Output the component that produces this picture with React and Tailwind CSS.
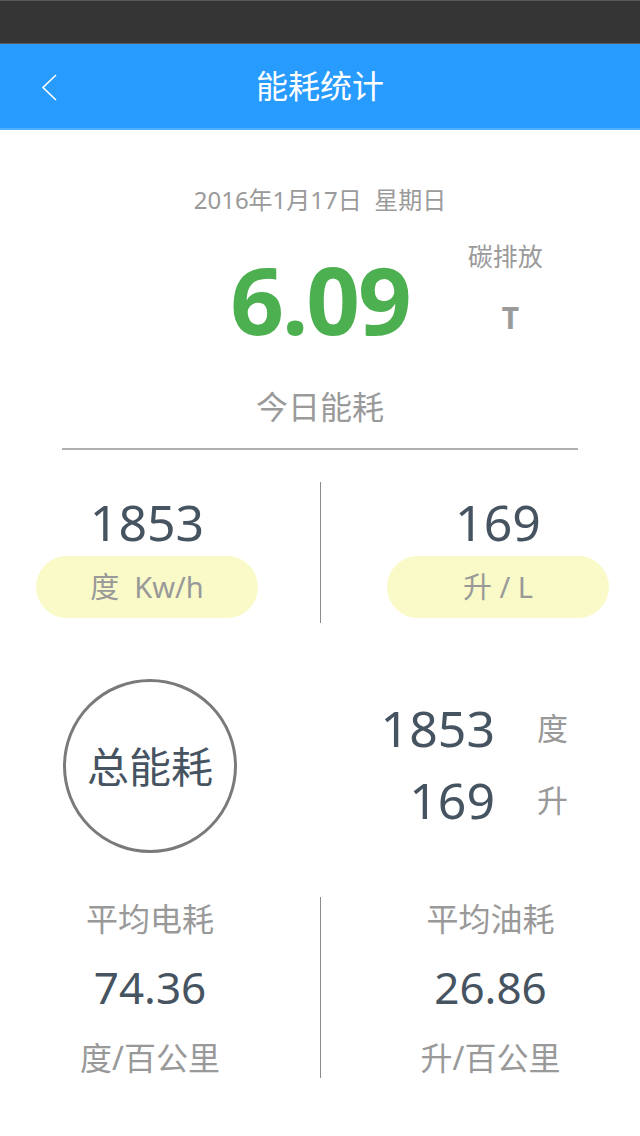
export default function App() {
  const sans = { fontFamily: '"Noto Sans", "Noto Sans CJK SC", sans-serif' };
  return (
    <div className="w-[640px] h-[1136px] bg-white overflow-hidden" style={sans}>
      {/* status bar */}
      <div className="h-[44px] bg-[#353535] border-t border-b border-[#5a5a5a]" />
      {/* header */}
      <div className="h-[86px] bg-[#289bff] border-b-2 border-[#52b1ff] flex items-center relative">
        <svg className="absolute left-[40px] top-[28px]" width="20" height="30" viewBox="0 0 20 30">
          <polyline points="16,3 3,15.5 16,28" fill="none" stroke="white" strokeWidth="1.6" />
        </svg>
        <div className="flex-1 text-center text-white text-[32px] leading-[40px]">能耗统计</div>
      </div>

      {/* today section */}
      <div className="flex flex-col items-center">
        <div className="mt-[55px] text-[24px] leading-[30px] text-[#9a9a9a]">2016年1月17日&nbsp;&nbsp;星期日</div>
        <div className="w-full grid grid-cols-[1fr_auto_1fr] mt-[24px]">
          <div />
          <div className="text-[#4caf50] font-bold text-[94px] leading-[120px] tracking-[-2px]">6.09</div>
          <div className="pl-[58px] flex flex-col items-start mt-[1px]">
            <div className="text-[25px] leading-[32px] text-[#9a9a9a]">碳排放</div>
            <div className="mt-[28px] ml-[34px] text-[30px] leading-[36px] font-bold text-[#9a9a9a]">T</div>
          </div>
        </div>
        <div className="mt-[28px] text-[32px] leading-[40px] text-[#9a9a9a]">今日能耗</div>
        <div className="mt-[21px] w-[516px] h-[2px] bg-[#b0b0b0]" />
      </div>

      {/* unit row */}
      <div className="grid grid-cols-2 mt-[32px] h-[141px]">
        <div className="pl-[36px]">
          <div className="w-[222px] flex flex-col items-center">
            <div className="text-[50px] leading-[56px] text-[#465361] pt-[12px]">1853</div>
            <div className="mt-[6px] w-[222px] h-[62px] rounded-full bg-[#fafac8] flex items-center justify-center text-[29px] text-[#999999]">度&nbsp;&nbsp;Kw/h</div>
          </div>
        </div>
        <div className="border-l border-[#8a8a8a] pl-[66px]">
          <div className="w-[222px] flex flex-col items-center">
            <div className="text-[50px] leading-[56px] text-[#465361] pt-[12px]">169</div>
            <div className="mt-[6px] w-[222px] h-[62px] rounded-full bg-[#fafac8] flex items-center justify-center text-[29px] text-[#999999]">升 / L</div>
          </div>
        </div>
      </div>

      {/* total section */}
      <div className="flex items-center mt-[56px]">
        <div className="ml-[63px] w-[174px] h-[174px] rounded-full border-[3px] border-[#7a7a7a] flex items-center justify-center text-[42px] text-[#465361]">总能耗</div>
        <div className="ml-[130px] flex flex-col gap-[12px] mt-[-4px]">
          <div className="flex items-center">
            <div className="w-[128px] text-right text-[50px] leading-[60px] text-[#465361]">1853</div>
            <div className="ml-[42px] text-[31px] text-[#999999]">度</div>
          </div>
          <div className="flex items-center">
            <div className="w-[128px] text-right text-[50px] leading-[60px] text-[#465361]">169</div>
            <div className="ml-[42px] text-[31px] text-[#999999]">升</div>
          </div>
        </div>
      </div>

      {/* averages */}
      <div className="grid grid-cols-2 mt-[44px] h-[179px]">
        <div className="flex flex-col items-center pr-[20px]">
          <div className="text-[32px] leading-[40px] text-[#999999] mt-[2px]">平均电耗</div>
          <div className="text-[44px] leading-[56px] text-[#465361] mt-[20px]">74.36</div>
          <div className="text-[32px] leading-[40px] text-[#999999] mt-[23px]">度/百公里</div>
        </div>
        <div className="flex flex-col items-center border-l border-[#8a8a8a] pl-[20px]">
          <div className="text-[32px] leading-[40px] text-[#999999] mt-[2px]">平均油耗</div>
          <div className="text-[44px] leading-[56px] text-[#465361] mt-[20px]">26.86</div>
          <div className="text-[32px] leading-[40px] text-[#999999] mt-[23px]">升/百公里</div>
        </div>
      </div>
    </div>
  );
}
